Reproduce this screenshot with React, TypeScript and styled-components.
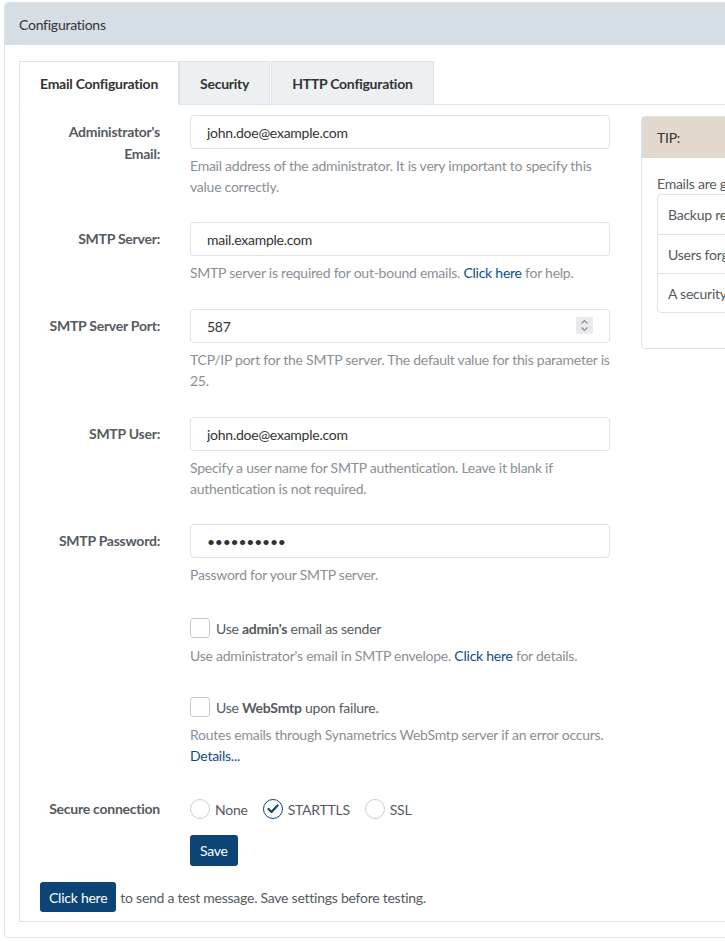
import React from 'react';
import styled, { createGlobalStyle } from 'styled-components';

const GlobalStyle = createGlobalStyle`
  html, body {
    margin: 0;
    padding: 0;
    background: #ffffff;
    overflow: hidden;
  }
  body {
    font-family: Lato, "Liberation Sans", sans-serif;
    font-size: 14px;
    letter-spacing: -0.25px;
    color: #333;
  }
  * { box-sizing: border-box; }
`;

const Card = styled.div`
  width: 1000px;
  margin: 2px 0 0 4px;
  border: 1px solid #dde3e8;
  border-radius: 4px;
  background: #fff;
`;

const CardHeader = styled.div`
  height: 42px;
  display: flex;
  align-items: center;
  padding: 0 14px;
  background: #d6dee5;
  color: #333;
  font-size: 14px;
  border-radius: 4px 4px 0 0;
`;

const CardBody = styled.div`
  padding: 16px 15px 15px 14px;
`;

const Tabs = styled.div`
  display: flex;
  height: 43px;
`;

const Tab = styled.div<{ $active?: boolean }>`
  display: flex;
  align-items: center;
  padding: 0 20px;
  font-weight: 700;
  color: #333;
  border: 1px solid #dde3e8;
  border-bottom: ${(p) => (p.$active ? '1px solid #fff' : '1px solid #dde3e8')};
  background: ${(p) => (p.$active ? '#fff' : '#edf0f2')};
  margin-right: ${(p) => (p.$active ? '0' : '1px')};
  margin-bottom: -1px;
  position: relative;
  z-index: 1;
`;

const Panel = styled.div`
  border: 1px solid #dde3e8;
  padding: 10px 20px 9px 20px;
`;

const Top = styled.div`
  display: flex;
  gap: 31px;
  align-items: flex-start;
`;

const FormGrid = styled.div`
  display: grid;
  grid-template-columns: 120px 420px;
  column-gap: 30px;
  width: 570px;
`;

const Label = styled.div`
  text-align: right;
  font-weight: 700;
  color: #555a5f;
  line-height: 22px;
  padding-top: 6px;
  max-width: 120px;
  margin-left: auto;
`;

const Field = styled.div<{ $gap?: number }>`
  margin-bottom: ${(p) => p.$gap ?? 25}px;
`;

const InputWrap = styled.div`
  position: relative;
`;

const Input = styled.input`
  width: 420px;
  height: 34px;
  border: 1px solid #dde3e8;
  border-radius: 4px;
  padding: 0 16px;
  font-family: inherit;
  font-size: 14px;
  letter-spacing: -0.25px;
  color: #333;
  background: #fff;
  outline: none;
`;

const Spinner = styled.div`
  position: absolute;
  right: 17px;
  top: 8px;
  width: 17px;
  height: 17px;
  background: #e8eaee;
  display: flex;
  align-items: center;
  justify-content: center;
`;

const Help = styled.div<{ $top?: number }>`
  margin-top: ${(p) => p.$top ?? 6}px;
  color: #8a8f94;
  line-height: 21px;
`;

const Link = styled.a`
  color: #0b4d85;
  text-decoration: none;
`;

const CheckRow = styled.label`
  display: flex;
  align-items: center;
  gap: 6px;
  height: 34px;
  color: #555a5f;
  b { font-weight: 700; }
`;

const CheckBox = styled.span`
  width: 20px;
  height: 20px;
  border: 1px solid #c9ced3;
  border-radius: 3px;
  background: #fff;
`;

const RadioGroup = styled.div`
  display: flex;
  align-items: center;
  height: 34px;
  gap: 15px;
`;

const RadioItem = styled.label`
  display: flex;
  align-items: center;
  gap: 5px;
  color: #555a5f;
`;

const Radio = styled.span<{ $checked?: boolean }>`
  width: 20px;
  height: 20px;
  border-radius: 50%;
  border: 1px solid ${(p) => (p.$checked ? '#0c4476' : '#c9ced3')};
  display: flex;
  align-items: center;
  justify-content: center;
`;

const Button = styled.button`
  background: #0c4476;
  color: #fff;
  border: none;
  border-radius: 3px;
  font-family: inherit;
  font-size: 14px;
  letter-spacing: -0.25px;
  padding: 0 10px;
  height: 31px;
`;

const SaveWrap = styled.div`
  margin-top: 9px;
`;

const TestRow = styled.div`
  display: flex;
  align-items: center;
  gap: 4px;
  margin-top: 16px;
  color: #555a5f;
`;

const TestButton = styled(Button)`
  height: 30px;
  padding: 0 9px;
`;

const Tip = styled.div`
  width: 320px;
  border: 1px solid #dde3e8;
  border-radius: 4px;
  margin-top: 1px;
  overflow: hidden;
`;

const TipHeader = styled.div`
  height: 41px;
  background: #e2d8ce;
  display: flex;
  align-items: center;
  padding: 0 15px;
  color: #333;
`;

const TipBody = styled.div`
  padding: 15px 15px 35px 15px;
  color: #555a5f;
  line-height: 21px;
`;

const ListGroup = styled.div`
  border: 1px solid #dde3e8;
  border-radius: 4px;
`;

const ListItem = styled.div`
  height: 39px;
  display: flex;
  align-items: center;
  padding: 0 10px;
  color: #555a5f;
  white-space: nowrap;
  & + & { border-top: 1px solid #dde3e8; }
`;

const Empty = styled.div``;

const Chevrons = () => (
  <svg width="9" height="13" viewBox="0 0 9 13" fill="none" stroke="#888" strokeWidth="1.1">
    <path d="M1.5 4.5 L4.5 1.5 L7.5 4.5" />
    <path d="M1.5 8.5 L4.5 11.5 L7.5 8.5" />
  </svg>
);

const Check = () => (
  <svg width="12" height="10" viewBox="0 0 12 10" fill="none" stroke="#0c4476" strokeWidth="2.2" strokeLinecap="round" strokeLinejoin="round">
    <path d="M1.5 5 L4.5 8 L10.5 1.5" />
  </svg>
);

export default function App() {
  return (
    <>
      <GlobalStyle />
      <Card>
        <CardHeader>Configurations</CardHeader>
        <CardBody>
          <Tabs>
            <Tab $active>Email Configuration</Tab>
            <Tab>Security</Tab>
            <Tab>HTTP Configuration</Tab>
          </Tabs>
          <Panel>
            <Top>
              <FormGrid>
                <Label>Administrator's Email:</Label>
                <Field>
                  <Input readOnly value="john.doe@example.com" />
                  <Help>
                    Email address of the administrator. It is very important to specify this value correctly.
                  </Help>
                </Field>

                <Label>SMTP Server:</Label>
                <Field $gap={26}>
                  <Input readOnly value="mail.example.com" />
                  <Help>
                    SMTP server is required for out-bound emails. <Link href="#">Click here</Link> for help.
                  </Help>
                </Field>

                <Label>SMTP Server Port:</Label>
                <Field $gap={26}>
                  <InputWrap>
                    <Input readOnly value="587" />
                    <Spinner>
                      <Chevrons />
                    </Spinner>
                  </InputWrap>
                  <Help>TCP/IP port for the SMTP server. The default value for this parameter is 25.</Help>
                </Field>

                <Label>SMTP User:</Label>
                <Field>
                  <Input readOnly value="john.doe@example.com" />
                  <Help>Specify a user name for SMTP authentication. Leave it blank if authentication is not required.</Help>
                </Field>

                <Label>SMTP Password:</Label>
                <Field $gap={26}>
                  <Input readOnly type="password" value="0123456789" />
                  <Help>Password for your SMTP server.</Help>
                </Field>

                <Empty />
                <Field $gap={24}>
                  <CheckRow>
                    <CheckBox />
                    <span>
                      Use <b>admin's</b> email as sender
                    </span>
                  </CheckRow>
                  <Help $top={0}>
                    Use administrator's email in SMTP envelope. <Link href="#">Click here</Link> for details.
                  </Help>
                </Field>

                <Empty />
                <Field $gap={26}>
                  <CheckRow>
                    <CheckBox />
                    <span>
                      Use <b>WebSmtp</b> upon failure.
                    </span>
                  </CheckRow>
                  <Help $top={0}>
                    Routes emails through Synametrics WebSmtp server if an error occurs.
                    <br />
                    <Link href="#">Details...</Link>
                  </Help>
                </Field>

                <Label>Secure connection</Label>
                <Field $gap={0}>
                  <RadioGroup>
                    <RadioItem>
                      <Radio />
                      None
                    </RadioItem>
                    <RadioItem>
                      <Radio $checked>
                        <Check />
                      </Radio>
                      STARTTLS
                    </RadioItem>
                    <RadioItem>
                      <Radio />
                      SSL
                    </RadioItem>
                  </RadioGroup>
                  <SaveWrap>
                    <Button>Save</Button>
                  </SaveWrap>
                </Field>
              </FormGrid>

              <Tip>
                <TipHeader>TIP:</TipHeader>
                <TipBody>
                  Emails are generated by the server when:
                  <ListGroup>
                    <ListItem>Backup restore operation completes</ListItem>
                    <ListItem>Users forget their password</ListItem>
                    <ListItem>A security alert is raised</ListItem>
                  </ListGroup>
                </TipBody>
              </Tip>
            </Top>
            <TestRow>
              <TestButton>Click here</TestButton>
              to send a test message. Save settings before testing.
            </TestRow>
          </Panel>
        </CardBody>
      </Card>
    </>
  );
}
